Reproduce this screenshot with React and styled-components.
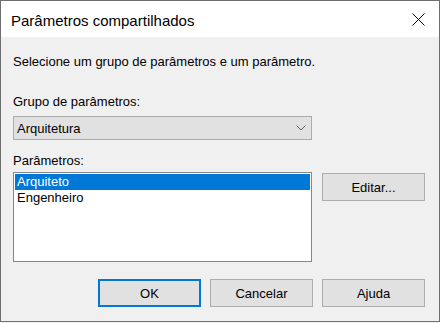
import React, { useState } from "react";
import styled, { createGlobalStyle } from "styled-components";

const GlobalStyle = createGlobalStyle`
  html, body {
    margin: 0;
    padding: 0;
    background: #f0f0f0;
  }
  * {
    box-sizing: border-box;
  }
`;

const FONT = `"Segoe UI", "Liberation Sans", Arial, sans-serif`;

const Window = styled.div`
  width: 440px;
  height: 322px;
  border: 1px solid #6f6f6f;
  display: flex;
  flex-direction: column;
  font-family: ${FONT};
  font-size: 13px;
  color: #000;
  background: #f0f0f0;
`;

const TitleBar = styled.div`
  height: 36px;
  background: #fff;
  display: flex;
  align-items: center;
  justify-content: space-between;
  padding: 0 14px 0 10px;
`;

const Title = styled.span`
  font-size: 15px;
  padding-top: 2px;
`;

const CloseButton = styled.button`
  border: none;
  background: transparent;
  padding: 0;
  width: 14px;
  height: 14px;
  display: flex;
  align-items: center;
  justify-content: center;
`;

const Body = styled.div`
  flex: 1;
  padding: 17px 14px 0 12px;
  display: flex;
  flex-direction: column;
`;

const Text = styled.div`
  line-height: 16px;
  margin-top: ${(p) => p.$top || 0}px;
`;

const Combo = styled.div`
  margin-top: 6px;
  width: 299px;
  height: 24px;
  background: #e1e1e1;
  border: 1px solid #adadad;
  display: flex;
  align-items: center;
  justify-content: space-between;
  padding: 0 5px 0 3px;
`;

const Row = styled.div`
  display: flex;
  gap: 10px;
  margin-top: 3px;
`;

const ListBox = styled.div`
  width: 299px;
  height: 90px;
  background: #fff;
  border: 1px solid #828790;
  padding: 1px;
`;

const Item = styled.div`
  height: 16px;
  line-height: 16px;
  padding-left: 2px;
  background: ${(p) => (p.$selected ? "#0078d7" : "transparent")};
  color: ${(p) => (p.$selected ? "#fff" : "#000")};
`;

const Button = styled.button`
  width: 103px;
  height: 28px;
  background: #e1e1e1;
  border: ${(p) => (p.$default ? "2px solid #0078d7" : "1px solid #adadad")};
  font-family: ${FONT};
  font-size: 13px;
  color: #000;
  padding: 0;
  margin-top: ${(p) => p.$top || 0}px;
`;

const Footer = styled.div`
  display: flex;
  justify-content: flex-end;
  gap: 9px;
  margin-top: 17px;
`;

const params = ["Arquiteto", "Engenheiro"];

export default function App() {
  const [selected, setSelected] = useState(0);
  return (
    <>
      <GlobalStyle />
      <Window>
        <TitleBar>
          <Title>Parâmetros compartilhados</Title>
          <CloseButton aria-label="Fechar">
            <svg width="13" height="13" viewBox="0 0 13 13">
              <path d="M0.5 0.5L12.5 12.5M12.5 0.5L0.5 12.5" stroke="#000" strokeWidth="1" />
            </svg>
          </CloseButton>
        </TitleBar>
        <Body>
          <Text>Selecione um grupo de parâmetros e um parâmetro.</Text>
          <Text $top={24}>Grupo de parâmetros:</Text>
          <Combo>
            <span>Arquitetura</span>
            <svg width="10" height="6" viewBox="0 0 10 6">
              <path d="M0.5 0.5L5 5L9.5 0.5" fill="none" stroke="#606060" strokeWidth="1" />
            </svg>
          </Combo>
          <Text $top={13}>Parâmetros:</Text>
          <Row>
            <ListBox>
              {params.map((p, i) => (
                <Item key={p} $selected={i === selected} onClick={() => setSelected(i)}>
                  {p}
                </Item>
              ))}
            </ListBox>
            <Button $top={1}>Editar...</Button>
          </Row>
          <Footer>
            <Button $default>OK</Button>
            <Button>Cancelar</Button>
            <Button>Ajuda</Button>
          </Footer>
        </Body>
      </Window>
    </>
  );
}
